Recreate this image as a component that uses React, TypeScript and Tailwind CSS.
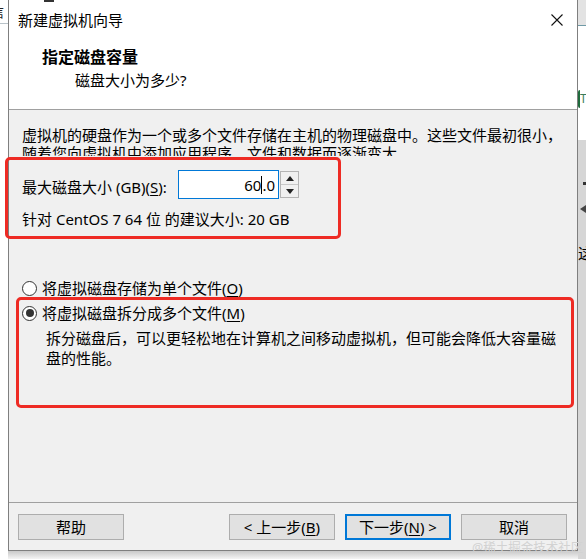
import React from "react";

const U = ({ children }: { children: React.ReactNode }) => (
  <span className="underline underline-offset-2">{children}</span>
);

function Radio({ checked }: { checked?: boolean }) {
  return (
    <div className="w-[15px] h-[15px] rounded-full border border-[#333333] bg-white flex items-center justify-center shrink-0">
      {checked && <div className="w-[8px] h-[8px] rounded-full bg-[#333333]" />}
    </div>
  );
}

function Btn({ children, primary }: { children: React.ReactNode; primary?: boolean }) {
  return (
    <div
      className={
        "w-[106px] h-[26px] flex items-center justify-center bg-[#e1e1e1] text-[15px] leading-[20px] " +
        (primary ? "border-2 border-[#0078d7]" : "border border-[#adadad]")
      }
    >
      {children}
    </div>
  );
}

export default function App() {
  return (
    <div className="relative w-[586px] h-[559px] overflow-hidden bg-white font-['Noto_Sans','Noto_Sans_CJK_SC',sans-serif] text-black">
      <div className="flex flex-row items-start h-full">
        {/* left background strip */}
        <div className="w-[8px] h-full bg-white flex flex-col">
          <div className="h-[23px]" />
          <div className="h-[1px] bg-[#b9c3c9]" />
        </div>

        {/* dialog */}
        <div className="w-[570px] flex flex-col">
          <div className="h-[551px] flex flex-col border-x border-b border-[#7f7f7f] bg-white">
            {/* title bar */}
            <div className="h-[40px] flex items-center justify-between pl-[9px] pr-[14px]">
              <span className="text-[15px] leading-[20px]">新建虚拟机向导</span>
              <svg width="12" height="12" viewBox="0 0 12 12">
                <path d="M0.5 0.5 L11.5 11.5 M11.5 0.5 L0.5 11.5" stroke="#111" strokeWidth="1.1" />
              </svg>
            </div>
            {/* header */}
            <div className="h-[70px] border-b border-[#a0a0a0] flex flex-col">
              <div className="pl-[33px] pt-[7px] text-[16px] leading-[20px] font-bold">指定磁盘容量</div>
              <div className="pl-[66px] mt-[3px] text-[15px] leading-[20px]">磁盘大小为多少?</div>
            </div>
            {/* body */}
            <div className="flex-1 bg-[#f0f0f0] flex flex-col pl-[13px] text-[15px]">
              <div className="mt-[16px] h-[30px] overflow-hidden leading-[18px] whitespace-nowrap">
                <div>虚拟机的硬盘作为一个或多个文件存储在主机的物理磁盘中。这些文件最初很小，</div>
                <div>随着您向虚拟机中添加应用程序、文件和数据而逐渐变大。</div>
              </div>
              <div className="mt-[14px] h-[29px] flex items-center">
                <span className="w-[156px] pt-[5px] leading-[20px] whitespace-nowrap">
                  最大磁盘大小 (GB)(<U>S</U>):
                </span>
                <div className="w-[101px] h-[29px] border border-[#0078d7] bg-white flex items-center justify-end pr-[3px] leading-[20px]">
                  <span>60</span>
                  <span className="w-[1px] h-[18px] bg-black" />
                  <span>.0</span>
                </div>
                <div className="ml-[1px] w-[19px] h-[27px] flex flex-col border border-[#b4b4b4] bg-[#f0f0f0]">
                  <div className="flex-1 flex items-center justify-center border-b border-[#c8c8c8]">
                    <svg width="8" height="5" viewBox="0 0 8 5">
                      <path d="M0 5 L4 0 L8 5 Z" fill="#222" />
                    </svg>
                  </div>
                  <div className="flex-1 flex items-center justify-center">
                    <svg width="8" height="5" viewBox="0 0 8 5">
                      <path d="M0 0 L8 0 L4 5 Z" fill="#222" />
                    </svg>
                  </div>
                </div>
              </div>
              <div className="mt-[10px] leading-[20px] whitespace-nowrap">针对 CentOS 7 64 位 的建议大小: 20 GB</div>

              <div className="mt-[49px] flex items-center gap-[5px] leading-[20px]">
                <Radio />
                <span>
                  将虚拟磁盘存储为单个文件(<U>O</U>)
                </span>
              </div>
              <div className="mt-[5px] flex items-center gap-[5px] leading-[20px]">
                <Radio checked />
                <span>
                  将虚拟磁盘拆分成多个文件(<U>M</U>)
                </span>
              </div>
              <div className="mt-[5px] pl-[24px] leading-[20px] whitespace-nowrap">
                <div>拆分磁盘后，可以更轻松地在计算机之间移动虚拟机，但可能会降低大容量磁</div>
                <div>盘的性能。</div>
              </div>
            </div>
            {/* footer */}
            <div className="h-[48px] bg-[#f0f0f0] border-t border-[#a0a0a0] flex items-start pt-[11px] pl-[9px] pr-[10px]">
              <Btn>帮助</Btn>
              <div className="flex-1" />
              <div className="flex gap-[10px]">
                <Btn>
                  &lt; 上一步(<U>B</U>)
                </Btn>
                <Btn primary>
                  下一步(<U>N</U>) &gt;
                </Btn>
                <Btn>取消</Btn>
              </div>
            </div>
          </div>
          <div className="h-[8px] bg-gradient-to-b from-[#c9c9c9] to-[#f4f4f4]" />
        </div>

        {/* right background strip */}
        <div className="w-[8px] h-full flex flex-col">
          <div className="h-[25px] bg-[#e3e3e3]" />
          <div className="h-[1px] bg-[#6f9aa6]" />
          <div className="h-[114px] bg-white flex flex-col">
            <div className="h-[62px]" />
            <div className="h-[22px] flex items-center">
              <div className="w-[3px] h-[18px] rounded-l-full border-l-2 border-[#1f6b3c]" />
              <span className="text-[12px] text-[#3b7b5a] leading-none">T</span>
            </div>
          </div>
          <div className="flex-1 bg-[#d6d6d6] flex flex-col items-end">
            <div className="h-[42px]" />
            <div className="w-[3px] h-[3px] bg-[#333]" />
            <div className="h-[20px]" />
            <svg width="6" height="8" viewBox="0 0 6 8">
              <path d="M6 0 L0 4 L6 8 Z" fill="#444" />
            </svg>
            <div className="h-[30px]" />
            <div className="w-full overflow-hidden text-[15px] leading-[20px] text-black">这</div>
          </div>
        </div>
      </div>

      {/* top-left partial glyph of window behind */}
      <div className="absolute left-[-10px] top-[4px] text-[14px] leading-[16px] text-[#222]">信</div>
      <div className="absolute left-[44px] top-0 w-[10px] h-[2px] bg-[#333]" />

      {/* red annotation boxes */}
      <div className="absolute left-[5px] top-[157px] w-[336px] h-[82px] border-[3px] border-[#ee2b24] rounded-[5px]" />
      <div className="absolute left-[16px] top-[297px] w-[558px] h-[111px] border-[3px] border-[#ee2b24] rounded-[5px]" />

      {/* watermark */}
      <div className="absolute left-[472px] top-[540px] text-[12.5px] leading-[16px] text-[#d2d2d2] whitespace-nowrap">
        @稀土掘金技术社区
      </div>
    </div>
  );
}
